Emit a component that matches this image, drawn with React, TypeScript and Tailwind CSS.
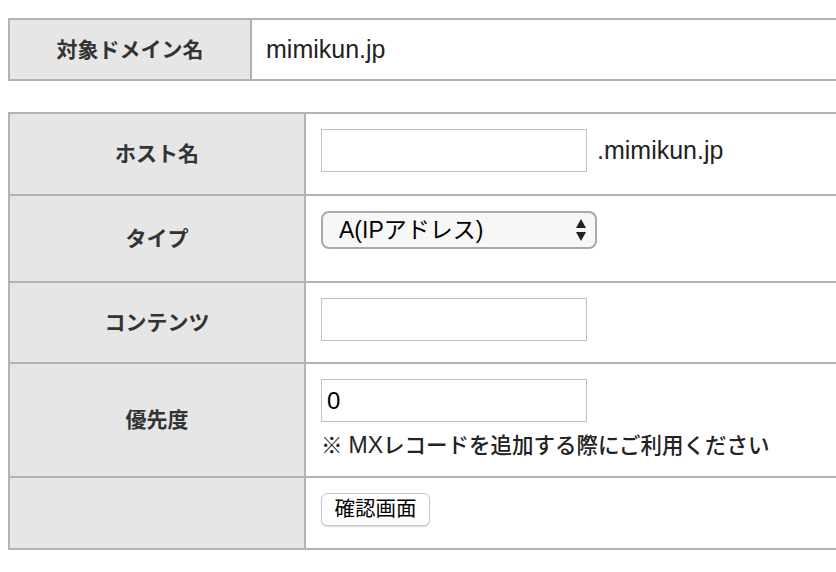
import React from 'react';

const FONT = 'font-["Liberation_Sans","Noto_Sans_CJK_JP",sans-serif]';

const Row: React.FC<{ label?: string; h: string; last?: boolean; children?: React.ReactNode }> = ({ label, h, last, children }) => (
  <div className={`flex ${last ? '' : 'border-b-2 border-[#b3b3b3]'}`}>
    <div className={`w-[296px] ${h} shrink-0 bg-[#e6e6e6] border-r-2 border-[#b3b3b3] flex items-center justify-center text-[21px] font-bold text-[#333]`}>
      {label}
    </div>
    <div className={`flex-1 ${h} pl-[15px] pt-[15px]`}>{children}</div>
  </div>
);

const TextBox: React.FC<{ value?: string }> = ({ value = '' }) => (
  <input
    type="text"
    defaultValue={value}
    className="w-[266px] h-[43px] border border-[#c0c0c0] bg-white px-[5px] text-[24px] text-black outline-none"
  />
);

const App: React.FC = () => {
  return (
    <div className={`w-[836px] h-[572px] overflow-hidden bg-white pt-[18px] pl-2 ${FONT}`}>
      {/* domain */}
      <div className="w-[840px] flex border-2 border-[#b3b3b3]">
        <div className="w-[242px] h-[59px] shrink-0 bg-[#e6e6e6] border-r-2 border-[#b3b3b3] flex items-center justify-center text-[21px] font-bold text-[#333]">
          対象ドメイン名
        </div>
        <div className="flex-1 h-[59px] pl-[14px] flex items-center text-[25px] text-[#222]">mimikun.jp</div>
      </div>

      {/* form */}
      <div className="mt-[31px] w-[840px] border-2 border-[#b3b3b3]">
        <Row label="ホスト名" h="h-[80px]">
          <div className="flex items-center">
            <TextBox />
            <span className="ml-[10px] text-[25px] text-[#222]">.mimikun.jp</span>
          </div>
        </Row>

        <Row label="タイプ" h="h-[85px]">
          <div className="relative w-[276px] h-[38px]">
            <select
              defaultValue="A"
              className="appearance-none w-full h-full rounded-[8px] border-2 border-[#a9a9a9] bg-[#f7f7f7] pl-[16px] text-[23px] text-black outline-none"
            >
              <option value="A">A(IPアドレス)</option>
              <option value="CNAME">CNAME</option>
              <option value="MX">MX</option>
              <option value="TXT">TXT</option>
            </select>
            <svg className="absolute right-[11px] top-[8px] pointer-events-none" width="10" height="23" viewBox="0 0 10 23">
              <path d="M5 0 L10 9 L0 9 Z" fill="#222" />
              <path d="M0 13 L10 13 L5 22 Z" fill="#222" />
            </svg>
          </div>
        </Row>

        <Row label="コンテンツ" h="h-[79px]">
          <TextBox />
        </Row>

        <Row label="優先度" h="h-[112px]">
          <TextBox value="0" />
          <div className="mt-[11px] leading-[25px] text-[21.5px] font-medium text-[#222]">
            ※ <span className="text-[23px]">MX</span>レコードを追加する際にご利用ください
          </div>
        </Row>

        <Row h="h-[70px]" last>
          <button className="w-[109px] h-[33px] rounded-[6px] border border-[#c8c8c8] bg-white text-[20.5px] text-black shadow-[0_1px_1px_rgba(0,0,0,0.15)] leading-none">
            確認画面
          </button>
        </Row>
      </div>
    </div>
  );
};

export default App;
